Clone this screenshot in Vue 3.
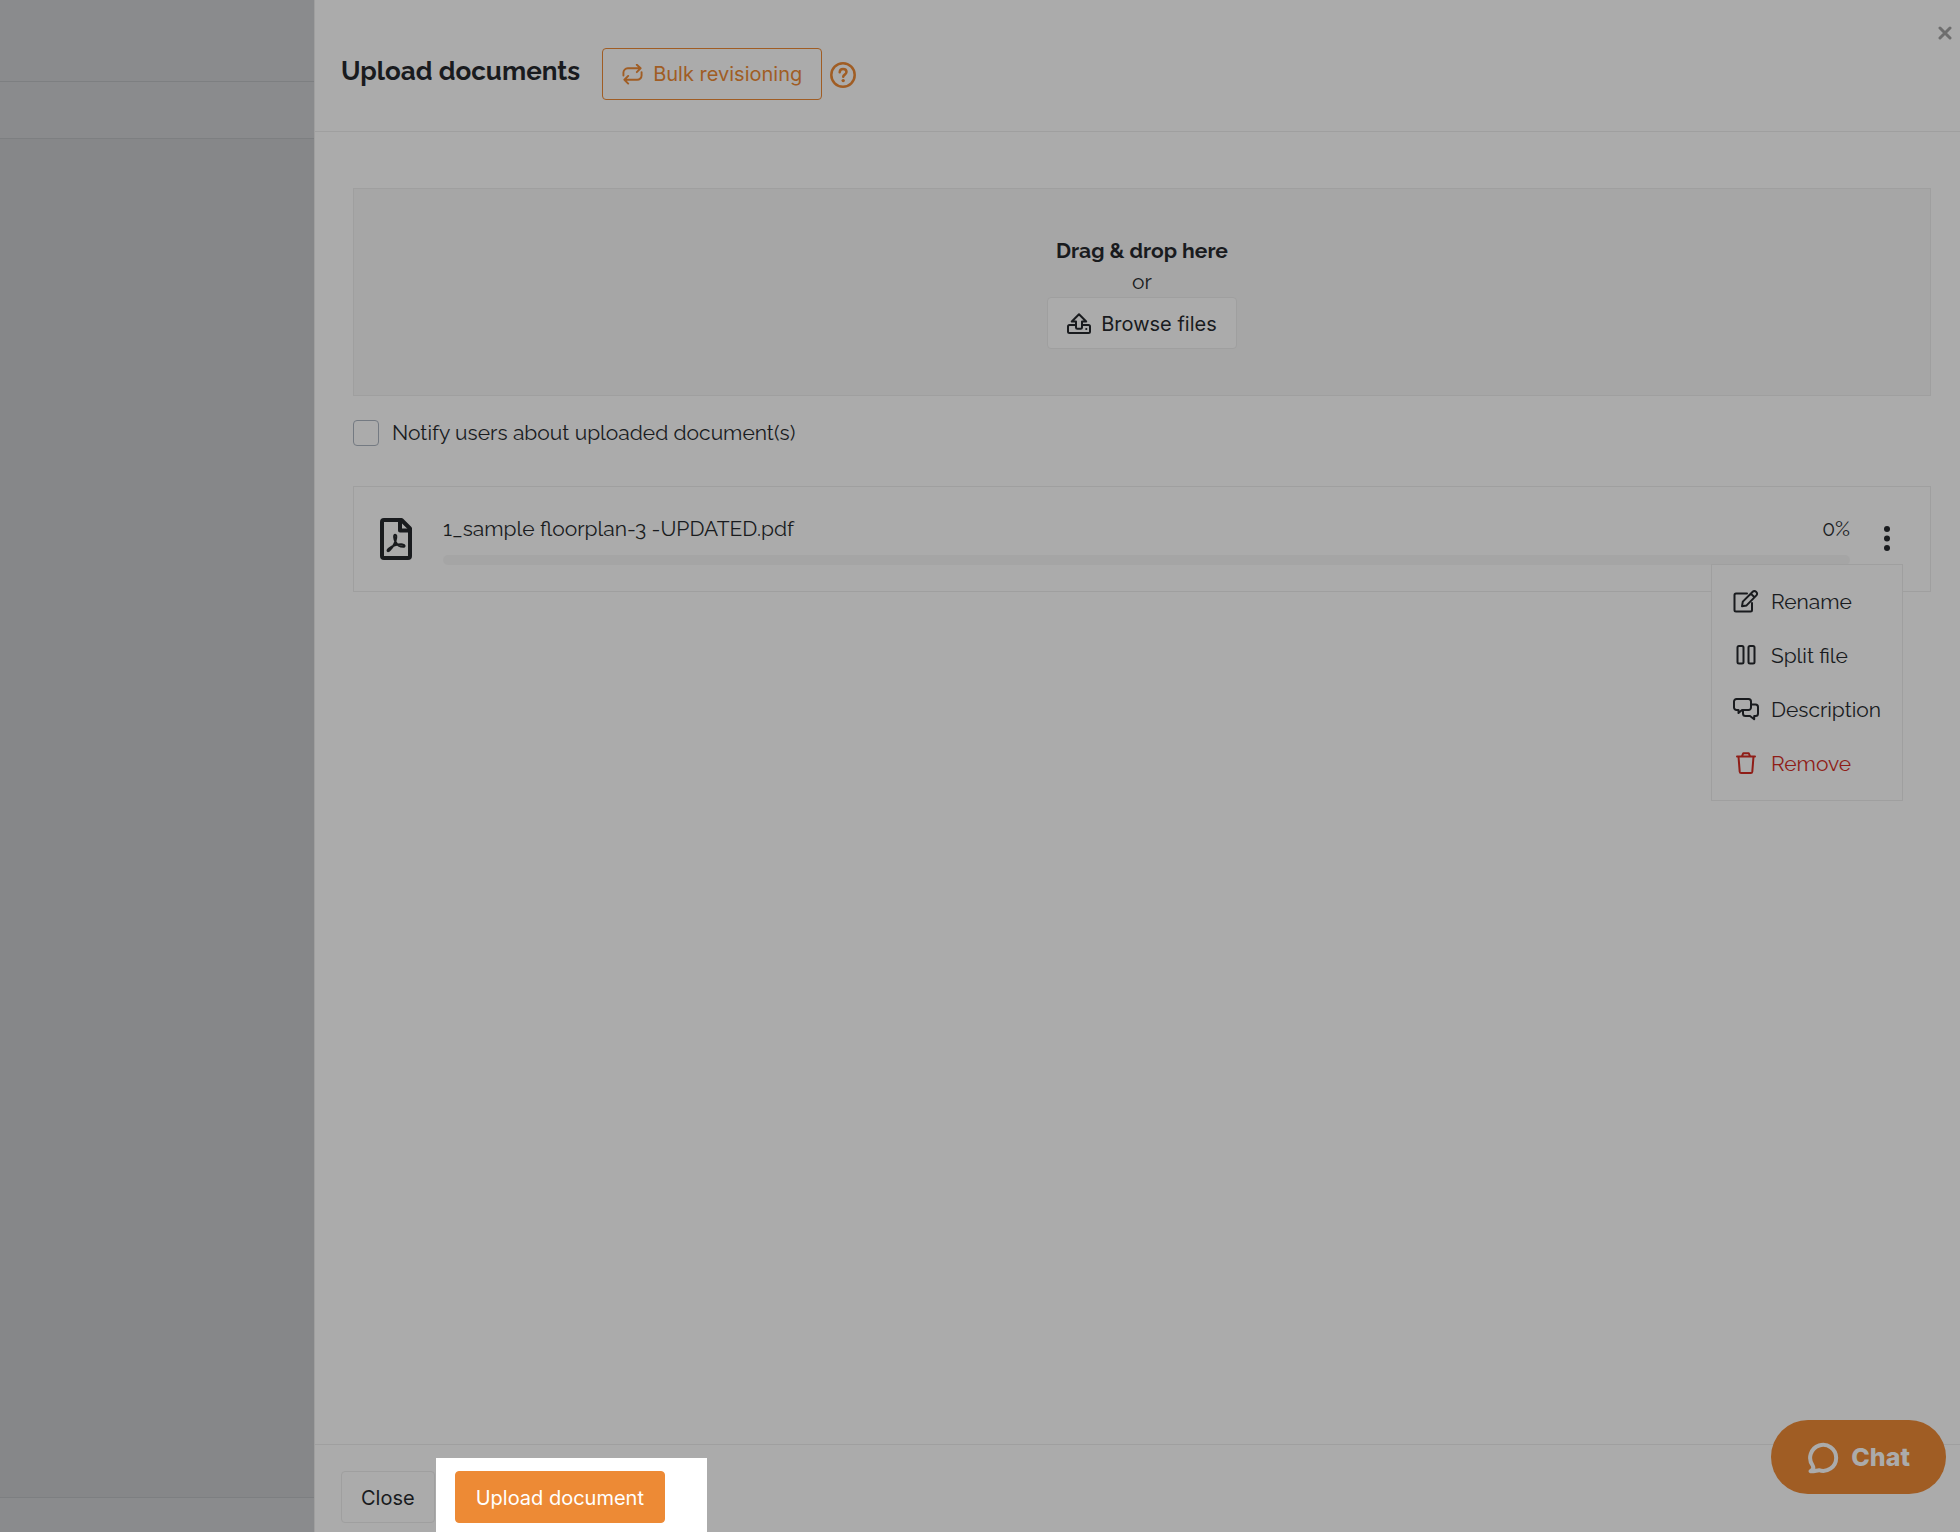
<script setup>
import { ref } from 'vue'

const notify = ref(false)
const files = [{ name: '1_sample floorplan-3 -UPDATED.pdf', progress: 0 }]
const actions = [
  { id: 'rename', label: 'Rename' },
  { id: 'split', label: 'Split file' },
  { id: 'description', label: 'Description' },
  { id: 'remove', label: 'Remove' },
]
</script>

<template>
  <div class="page">
    <aside class="backdrop">
      <div class="backdrop-top"></div>
      <div class="backdrop-bar"></div>
      <div class="backdrop-body"></div>
      <div class="backdrop-footer"></div>
    </aside>

    <main class="drawer">
      <header class="drawer-header">
        <h1>Upload documents</h1>
        <button class="btn outline" type="button">
          <svg viewBox="0 0 22 22" width="21" height="21">
            <path d="M1.5 12V9A4.500 4.500 0 0 1 6 4.500h13.500M15.500 .8l4 3.700-4 4M20.500 8.500V12A4.500 4.500 0 0 1 16 16.500H2.500M6.500 12.500l-4 4 4 4" />
          </svg>
          Bulk revisioning
        </button>
        <button class="help" type="button" aria-label="Help">
          <svg viewBox="0 0 26 26" width="26" height="26">
            <circle cx="13" cy="13" r="11.7" />
            <path d="M9.700 10.300c.1-2 1.500-3.200 3.400-3.200s3.400 1.200 3.400 3c0 2.500-3.300 2.500-3.300 4.700" />
            <circle class="dot" cx="13.200" cy="18.600" r="1.700" />
          </svg>
        </button>
        <button class="close" type="button" aria-label="Close panel">
          <svg viewBox="0 0 14 14" width="14" height="14"><path d="M2 2l10 10M12 2L2 12" /></svg>
        </button>
      </header>

      <section class="content">
        <div class="dropzone">
          <strong>Drag &amp; drop here</strong>
          <span>or</span>
          <button class="btn" type="button">
            <svg viewBox="0 0 24 22" width="24" height="22">
              <path d="M9 12H2.500A1.500 1.500 0 0 0 1 13.500v5A1.500 1.500 0 0 0 2.500 20h19a1.500 1.500 0 0 0 1.500-1.500v-5a1.500 1.500 0 0 0-1.500-1.500H15" />
              <path d="M12 1.200L4.800 8.500H9v6c0 .8.500 1.300 1.300 1.300h3.400c.8 0 1.300-.5 1.300-1.300v-6h4.200z" />
              <circle class="dot" cx="19.300" cy="16" r="1.100" />
            </svg>
            Browse files
          </button>
        </div>

        <label class="notify" for="notify">
          <input id="notify" v-model="notify" type="checkbox" />
          Notify users about uploaded document(s)
        </label>

        <div v-for="file in files" :key="file.name" class="file">
          <svg class="icon-pdf" viewBox="0 0 32 42" width="32" height="42">
            <path class="sheet" d="M4 2h17.500L30 10.500V38a2 2 0 0 1-2 2H4a2 2 0 0 1-2-2V4a2 2 0 0 1 2-2z" />
            <path class="sheet" d="M20 2v10.500h10" />
            <path d="M15.200 16.800c-1.700 0-1.200 4 .3 7 1.500 2.900 4.700 5 7.800 5 1.800 0 1.800-2.200-.7-2.400-4.700-.3-9.800 1.200-13.600 4.100-2.600 2.100-1.100 3.600.6 1.900 2.700-2.900 6-7.800 6.600-12.600.2-1.900 0-3-1-3z" />
          </svg>
          <div class="file-info">
            <div class="file-line">
              <span>{{ file.name }}</span>
              <span>{{ file.progress }}%</span>
            </div>
            <div class="progress">
              <div class="progress-bar" :style="{ width: file.progress + '%' }"></div>
            </div>
          </div>
          <div class="more">
            <button class="more-btn" type="button" aria-label="File actions">
              <svg viewBox="0 0 6 26" width="6" height="26">
                <circle cx="3" cy="3" r="3" />
                <circle cx="3" cy="12.500" r="3" />
                <circle cx="3" cy="22" r="3" />
              </svg>
            </button>
            <div class="menu">
              <button v-for="a in actions" :key="a.id" type="button" class="menu-item" :class="a.id">
                <svg viewBox="0 0 26 24" width="26" height="24">
                  <template v-if="a.id === 'rename'">
                    <path d="M14 4.500H3A1.500 1.500 0 0 0 1.500 6v15A1.500 1.500 0 0 0 3 22.500h14.500A1.500 1.500 0 0 0 19 21v-7" />
                    <path d="M9 17.300l.8-4.700L19.700 2.700a2.300 2.300 0 0 1 3.300 0l.4.400a2.300 2.300 0 0 1 0 3.300L13.600 16.400zM17.800 4.600l3.700 3.700" />
                  </template>
                  <template v-else-if="a.id === 'split'">
                    <rect x="4.500" y="3" width="6" height="17.500" rx="1.500" />
                    <rect x="15.500" y="3" width="6" height="17.500" rx="1.500" />
                  </template>
                  <template v-else-if="a.id === 'description'">
                    <path d="M3.500 2h12A2.500 2.500 0 0 1 18 4.500v6a2.500 2.500 0 0 1-2.500 2.500H9l-3.500 3v-3h-2A2.500 2.500 0 0 1 1 10.500v-6A2.500 2.500 0 0 1 3.500 2z" />
                    <path d="M18 7.500h4.500A2.500 2.500 0 0 1 25 10v6.500a2.500 2.500 0 0 1-2.500 2.500h-1.300v3.200L17 19h-4.500a2.500 2.500 0 0 1-2.500-2.500V13" />
                  </template>
                  <template v-else>
                    <path d="M4 5.500h18M9 5.200l1.300-3h5.400l1.300 3M5.500 5.500l1.200 15.200a1.500 1.500 0 0 0 1.500 1.300h9.600a1.500 1.500 0 0 0 1.500-1.300L20.500 5.500" />
                  </template>
                </svg>
                {{ a.label }}
              </button>
            </div>
          </div>
        </div>
      </section>

      <footer class="drawer-footer">
        <button class="btn cancel" type="button">Close</button>
        <div class="spotlight">
          <button class="btn primary" type="button">Upload document</button>
        </div>
      </footer>
    </main>

    <button class="chat" type="button">
      <svg viewBox="0 0 32 34" width="32" height="34">
        <path d="M3.500 31.200c2.400-1.400 3.300-3.600 2.200-5.600A13 13 0 1 1 12 30.200c-2.600.2-5.200 1.300-8.500 1z" />
      </svg>
      Chat
    </button>
  </div>
</template>

<style>
body {
  margin: 0;
}
</style>

<style scoped>
.page {
  display: grid;
  grid-template-columns: 314px 1fr;
  min-height: 100vh;
  background: #ababab;
  color: #191b1e;
  font-family: Raleway, Lato, "Open Sans", sans-serif;
  font-size: 21px;
  line-height: 31px;
}

button {
  font: inherit;
  color: inherit;
  background: none;
  border: none;
  padding: 0;
  cursor: pointer;
}

svg {
  flex: none;
  display: block;
  fill: none;
  stroke: currentColor;
  stroke-width: 2;
  stroke-linecap: round;
  stroke-linejoin: round;
}

.dot {
  fill: currentColor;
  stroke: none;
}

/* Dimmed page behind the drawer */
.backdrop {
  display: flex;
  flex-direction: column;
  background: #868789;
}

.backdrop-top,
.backdrop-bar {
  background: #8a8b8d;
  border-bottom: 1px solid #7d7f81;
}

.backdrop-top {
  height: 81px;
}

.backdrop-bar {
  height: 56px;
}

.backdrop-body {
  flex: 1;
}

.backdrop-footer {
  height: 34px;
  background: #8a8b8d;
  border-top: 1px solid #7d7f81;
}

/* Drawer */
.drawer {
  display: flex;
  flex-direction: column;
  border-left: 1px solid #9f9f9f;
}

.drawer-header {
  position: relative;
  display: flex;
  align-items: center;
  height: 83px;
  padding: 32px 26px 16px;
  border-bottom: 1px solid #9f9f9f;
}

h1 {
  margin: 0 22px 4px 0;
  font-size: 26px;
  font-weight: 700;
}

.btn {
  display: flex;
  align-items: center;
  box-sizing: border-box;
  height: 52px;
  gap: 10px;
  padding: 2px 19px 0;
  border: 1px solid #9f9f9f;
  border-radius: 4px;
  background: #ababab;
  font-family: Inter, sans-serif;
  font-size: 20px;
}

.btn.outline {
  color: #a05d24;
  border-color: #a05d24;
}

.btn.primary {
  padding: 2px 20px 0;
  color: #fff;
  border-color: #ed8a35;
  background: #ed8a35;
}

.help {
  margin: 2px 0 0 8px;
  color: #a05d24;
}

.help svg {
  stroke-width: 2.5;
}

.close {
  position: absolute;
  top: 26px;
  right: 8px;
  color: #6e6e6e;
}

.close svg {
  stroke-width: 3;
}

.content {
  flex: 1;
  padding: 56px 29px 56px 38px;
}

.dropzone {
  display: flex;
  flex-direction: column;
  align-items: center;
  padding: 46px 0;
  border: 1px solid #9f9f9f;
  background: #a6a6a6;
}

.notify {
  display: flex;
  align-items: center;
  gap: 13px;
  width: max-content;
  margin: 21px 0 38px;
}

.notify input {
  appearance: none;
  box-sizing: border-box;
  width: 26px;
  height: 26px;
  margin: 0;
  border: 1px solid #747a82;
  border-radius: 4px;
}

.file {
  display: flex;
  align-items: center;
  height: 104px;
  padding: 0 40px 0 26px;
  border: 1px solid #9f9f9f;
}

.icon-pdf .sheet {
  stroke-width: 4;
}

.file-info {
  flex: 1;
  margin: 0 34px 0 31px;
}

.file-line {
  display: flex;
  justify-content: space-between;
}

.progress {
  height: 10px;
  margin-top: 11px;
  border-radius: 5px;
  background: #a5a5a5;
  overflow: hidden;
}

.progress-bar {
  height: 100%;
  background: #a05d24;
}

.more {
  position: relative;
}

.more-btn {
  display: block;
}

.more-btn circle {
  fill: currentColor;
  stroke: none;
}

.menu {
  position: absolute;
  top: 38px;
  right: -13px;
  padding: 9px 21px 10px;
  border: 1px solid #9f9f9f;
  background: #ababab;
}

.menu-item {
  display: flex;
  align-items: center;
  gap: 12px;
  height: 54px;
  white-space: nowrap;
}

.menu-item.remove {
  color: #8f1d17;
}

.drawer-footer {
  display: flex;
  align-items: flex-start;
  gap: 1px;
  height: 87px;
  padding-left: 26px;
  border-top: 1px solid #9f9f9f;
}

.cancel {
  margin-top: 26px;
}

.spotlight {
  align-self: stretch;
  margin-top: 13px;
  padding: 13px 42px 0 19px;
  background: #fff;
}

/* Floating chat launcher */
.chat {
  position: fixed;
  right: 14px;
  bottom: 38px;
  display: flex;
  align-items: center;
  gap: 12px;
  height: 74px;
  padding: 0 36px;
  border-radius: 37px;
  background: #a05d24;
  color: #ababab;
  font-family: Inter, sans-serif;
  font-size: 25px;
  font-weight: 800;
}

.chat svg {
  stroke-width: 4;
}
</style>
